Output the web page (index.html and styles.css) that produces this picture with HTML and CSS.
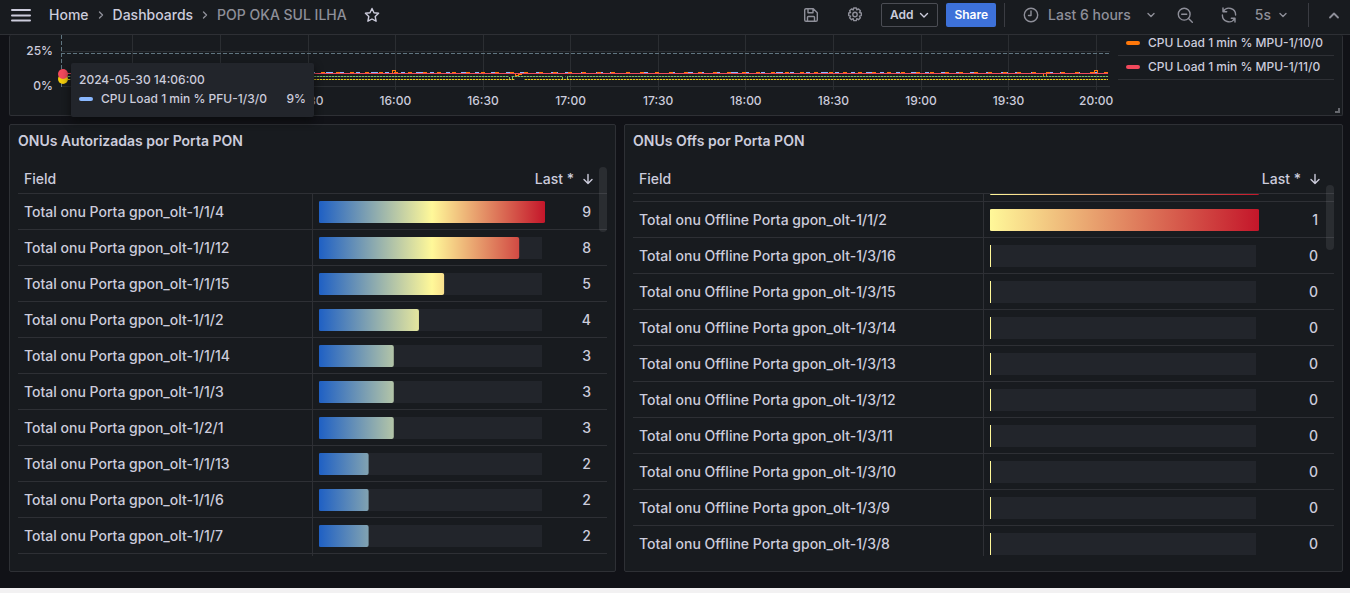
FILE: index.html
```html
<!DOCTYPE html>
<html lang="en">
<head>
<meta charset="utf-8">
<title>POP OKA SUL ILHA - Dashboards</title>
<link rel="stylesheet" href="styles.css">
</head>
<body>
<header class="toolbar">
  <button class="icon-btn menu" aria-label="Menu"><svg width="20" height="14" viewBox="0 0 20 14"><path d="M1 2h18M1 7.500h18M1 12.500h18" stroke-width="2"/></svg></button>
  <nav class="crumbs" aria-label="Breadcrumbs">
    <a href="#">Home</a>
    <svg class="sep" width="8" height="10" viewBox="0 0 8 10"><path d="M2.500 2l3 3-3 3"/></svg>
    <a href="#">Dashboards</a>
    <svg class="sep" width="8" height="10" viewBox="0 0 8 10"><path d="M2.500 2l3 3-3 3"/></svg>
    <span class="current">POP OKA SUL ILHA</span>
  </nav>
  <button class="icon-btn star" aria-label="Mark as favorite"><svg width="16" height="16" viewBox="0 0 16 16"><path d="M8 1.500l2 4.200 4.600.6-3.400 3.200.9 4.700L8 12l-4.100 2.200.9-4.700L1.400 6.300 6 5.700z"/></svg></button>
  <div class="actions">
    <button class="icon-btn" aria-label="Save dashboard"><svg width="16" height="16" viewBox="0 0 16 16"><path d="M3 1.700h7.300l4 4V13a1.300 1.300 0 0 1-1.300 1.300H3A1.300 1.300 0 0 1 1.700 13V3A1.300 1.300 0 0 1 3 1.700zM5 2v3.700h5V2M4.500 14v-3.700A.8.800 0 0 1 5.300 9.500h5.400a.8.800 0 0 1 .8.800V14"/></svg></button>
    <button class="icon-btn gear" aria-label="Dashboard settings"><svg width="16" height="16" viewBox="0 0 16 16"><path d="M6.700 1h2.600l.5 1.900 1.700-1 1.900 1.900-1 1.700 1.900.5v2.600l-1.900.5 1 1.700-1.900 1.900-1.700-1-.5 1.900H6.700l-.5-1.900-1.700 1-1.900-1.900 1-1.700L1.700 8.600V6l1.900-.5-1-1.700 1.900-1.900 1.700 1z"/><circle cx="8" cy="7.500" r="2.200"/></svg></button>
    <button class="btn btn-outline">Add <svg width="10" height="8" viewBox="0 0 10 8"><path d="M1.500 2.500L5 6l3.500-3.500"/></svg></button>
    <button class="btn btn-primary">Share</button>
    <span class="divider"></span>
    <button class="text-btn time"><svg width="16" height="16" viewBox="0 0 16 16"><circle cx="8" cy="8" r="6.700"/><path d="M8 4v4.500H5.500"/></svg><span>Last 6 hours</span><svg width="10" height="8" viewBox="0 0 10 8"><path d="M2 2.500l3 3 3-3"/></svg></button>
    <button class="icon-btn zoom" aria-label="Zoom out"><svg width="16" height="16" viewBox="0 0 16 16"><circle cx="7.200" cy="7.200" r="5.900"/><path d="M11.500 11.500l3.800 3.800M4.700 7.200h5"/></svg></button>
    <button class="icon-btn refresh" aria-label="Refresh"><svg width="16" height="16" viewBox="0 0 16 16"><path d="M2 1v3.700h3.700M2.300 4.500A6.600 6.600 0 0 1 14.600 8M14 15v-3.700h-3.700M13.700 11.500A6.600 6.600 0 0 1 1.400 8"/></svg></button>
    <button class="text-btn interval"><span>5s</span><svg width="10" height="8" viewBox="0 0 10 8"><path d="M2 2.500l3 3 3-3"/></svg></button>
    <span class="divider"></span>
    <button class="icon-btn collapse" aria-label="Collapse toolbar"><svg width="12" height="8" viewBox="0 0 12 8"><path d="M2 6.500l4-4 4 4" stroke-width="1.800"/></svg></button>
  </div>
</header>

<main class="dashboard">
  <section class="panel chart-panel">
    <div class="y-axis"><span>25%</span><span>0%</span></div>
    <div class="plot">
      <svg class="series" viewBox="0 0 1049 56" preserveAspectRatio="none" aria-hidden="true">
        <path class="grid" d="M71.500 0v55M159.500 0v55M247.500 0v55M334.500 0v55M422.500 0v55M509.500 0v55M597.500 0v55M684.500 0v55M772.500 0v55M860.500 0v55M947.500 0v55M1035.500 0v55M0 16.500h1049M0 51.500h1049"/>
        <path class="cursor" d="M0 18.500h1049M.5 0v52"/>
        <path class="blue" d="M250 37.500h797"/>
        <path class="orange" d="M260 37.500h787"/>
        <path class="red" d="M0 38.500h1047"/>
        <path class="orange-mark" d="M331.500 38v-2.500h3V38M454.500 39v1.500h3V39h3M982.500 39v2.500h3V39M1033.500 38v-2.500h3V38"/>
        <path class="green" d="M0 41.500h448v3h3v-3h50v2.500h5v-2.500h541"/>
        <path class="yellow" d="M0 44.500h454M463 44.500h584"/>
        <path class="dots" d="M0 41.500h1047M0 44.500h454M463 44.500h584"/>
      </svg>
      <div class="x-axis"><span>15:30</span><span>16:00</span><span>16:30</span><span>17:00</span><span>17:30</span><span>18:00</span><span>18:30</span><span>19:00</span><span>19:30</span><span>20:00</span></div>
      <i class="point point-yellow"></i><i class="point point-red"></i>
      <div class="tooltip">
        <div>2024-05-30 14:06:00</div>
        <div class="tip-row"><i class="swatch swatch-blue"></i><span>CPU Load 1 min % PFU-1/3/0</span><span class="tip-value">9%</span></div>
      </div>
    </div>
    <ul class="legend">
      <li><i class="swatch swatch-orange"></i>CPU Load 1 min % MPU-1/10/0</li>
      <li><i class="swatch swatch-red"></i>CPU Load 1 min % MPU-1/11/0</li>
    </ul>
    <i class="resize"></i>
  </section>

  <section class="panel">
    <h2>ONUs Autorizadas por Porta PON</h2>
    <div class="table-wrap">
      <table class="table cool">
        <thead><tr><th>Field</th><th class="num">Last * <svg width="12" height="12" viewBox="0 0 12 12"><path d="M6 1.500v9M2 6.500l4 4 4-4"/></svg></th></tr></thead>
        <tbody>
          <tr><td>Total onu Porta gpon_olt-1/1/4</td><td class="value"><div class="gauge"><i style="--rest:0%"></i></div><span>9</span></td></tr>
          <tr><td>Total onu Porta gpon_olt-1/1/12</td><td class="value"><div class="gauge"><i style="--rest:11.5%"></i></div><span>8</span></td></tr>
          <tr><td>Total onu Porta gpon_olt-1/1/15</td><td class="value"><div class="gauge"><i style="--rest:44.600%"></i></div><span>5</span></td></tr>
          <tr><td>Total onu Porta gpon_olt-1/1/2</td><td class="value"><div class="gauge"><i style="--rest:55.700%"></i></div><span>4</span></td></tr>
          <tr><td>Total onu Porta gpon_olt-1/1/14</td><td class="value"><div class="gauge"><i style="--rest:66.800%"></i></div><span>3</span></td></tr>
          <tr><td>Total onu Porta gpon_olt-1/1/3</td><td class="value"><div class="gauge"><i style="--rest:66.800%"></i></div><span>3</span></td></tr>
          <tr><td>Total onu Porta gpon_olt-1/2/1</td><td class="value"><div class="gauge"><i style="--rest:66.800%"></i></div><span>3</span></td></tr>
          <tr><td>Total onu Porta gpon_olt-1/1/13</td><td class="value"><div class="gauge"><i style="--rest:77.900%"></i></div><span>2</span></td></tr>
          <tr><td>Total onu Porta gpon_olt-1/1/6</td><td class="value"><div class="gauge"><i style="--rest:77.900%"></i></div><span>2</span></td></tr>
          <tr><td>Total onu Porta gpon_olt-1/1/7</td><td class="value"><div class="gauge"><i style="--rest:77.900%"></i></div><span>2</span></td></tr>
          <tr><td></td><td></td></tr>
        </tbody>
      </table>
      <i class="thumb"></i>
    </div>
  </section>

  <section class="panel">
    <h2>ONUs Offs por Porta PON</h2>
    <div class="table-wrap">
      <table class="table warm scrolled">
        <thead><tr><th>Field</th><th class="num">Last * <svg width="12" height="12" viewBox="0 0 12 12"><path d="M6 1.500v9M2 6.500l4 4 4-4"/></svg></th></tr></thead>
        <tbody>
          <tr><td></td><td class="value"><div class="gauge"><i style="--rest:0%"></i></div></td></tr>
          <tr><td>Total onu Offline Porta gpon_olt-1/1/2</td><td class="value"><div class="gauge"><i style="--rest:0%"></i></div><span>1</span></td></tr>
          <tr><td>Total onu Offline Porta gpon_olt-1/3/16</td><td class="value"><div class="gauge zero"></div><span>0</span></td></tr>
          <tr><td>Total onu Offline Porta gpon_olt-1/3/15</td><td class="value"><div class="gauge zero"></div><span>0</span></td></tr>
          <tr><td>Total onu Offline Porta gpon_olt-1/3/14</td><td class="value"><div class="gauge zero"></div><span>0</span></td></tr>
          <tr><td>Total onu Offline Porta gpon_olt-1/3/13</td><td class="value"><div class="gauge zero"></div><span>0</span></td></tr>
          <tr><td>Total onu Offline Porta gpon_olt-1/3/12</td><td class="value"><div class="gauge zero"></div><span>0</span></td></tr>
          <tr><td>Total onu Offline Porta gpon_olt-1/3/11</td><td class="value"><div class="gauge zero"></div><span>0</span></td></tr>
          <tr><td>Total onu Offline Porta gpon_olt-1/3/10</td><td class="value"><div class="gauge zero"></div><span>0</span></td></tr>
          <tr><td>Total onu Offline Porta gpon_olt-1/3/9</td><td class="value"><div class="gauge zero"></div><span>0</span></td></tr>
          <tr><td>Total onu Offline Porta gpon_olt-1/3/8</td><td class="value"><div class="gauge zero"></div><span>0</span></td></tr>
        </tbody>
      </table>
      <i class="thumb thumb-low"></i>
    </div>
  </section>
</main>
<footer class="strip"></footer>
</body>
</html>
```
FILE: styles.css
```css
:root {
  --text: #ccccdc;
  --muted: #8e8f99;
  --line: #2e3035;
  --panel: #181b1f;
}
* { box-sizing: border-box; }
body {
  margin: 0;
  background: #111217;
  color: var(--text);
  font: 500 14px/22px Inter, Roboto, sans-serif;
}
svg { display: block; flex: none; fill: none; stroke: currentColor; stroke-width: 1.4; stroke-linecap: round; stroke-linejoin: round; }
button { font: inherit; color: inherit; background: none; border: 0; padding: 0; cursor: pointer; }

.toolbar {
  display: flex;
  align-items: center;
  height: 35px;
  padding: 0 10px 4px 11px;
  background: var(--panel);
  border-bottom: 1px solid var(--line);
}
.crumbs { display: flex; align-items: center; gap: 8px; margin-left: 18px; }
.crumbs a { color: var(--text); text-decoration: none; }
.sep { color: var(--muted); }
.current { color: var(--muted); }
.star { margin-left: 17px; }
.actions { display: flex; align-items: center; margin-left: auto; color: var(--muted); }
.gear { margin-left: 28px; }
.btn { display: flex; align-items: center; gap: 6px; height: 24px; padding: 0 8px; border-radius: 2px; font-size: 12px; font-weight: 600; }
.btn-outline { margin-left: 18px; border: 1px solid #4b4d54; color: var(--text); }
.btn-primary { margin-left: 8px; background: #3d71d9; color: #fff; }
.divider { width: 1px; height: 24px; margin-left: 8px; background: #3a3c42; }
.text-btn { display: flex; align-items: center; }
.time { margin-left: 18px; gap: 9px; }
.time svg:last-child { margin-left: 6px; }
.zoom { margin-left: 21px; }
.refresh { margin-left: 28px; }
.interval { margin-left: 18px; gap: 7px; }
.interval + .divider { margin-left: 20px; }
.collapse { margin-left: 19px; }

.dashboard { display: grid; grid-template-columns: 607fr 719fr; gap: 8px; padding: 0 7px 16px 9px; }
.panel { position: relative; min-width: 0; padding: 5px 8px 15px; background: var(--panel); border: 1px solid var(--line); border-radius: 2px; }

.chart-panel { grid-column: 1 / -1; display: flex; height: 81px; padding: 0 8px; border-top: 0; font-size: 12px; line-height: 16px; }
.y-axis { display: flex; flex-direction: column; gap: 19px; width: 43px; padding: 8px 8px 0 0; text-align: right; }
.plot { position: relative; flex: 1; min-width: 0; }
.series { width: 100%; height: 56px; stroke-linecap: butt; stroke-width: 1; shape-rendering: crispEdges; }
.grid { stroke: #2b2e32; }
.cursor { stroke: #607580; stroke-dasharray: 4 2; }
.blue { stroke: #8ab8ff; stroke-dasharray: 4 11 7 7 4 12; }
.orange { stroke: #ff780a; stroke-dasharray: 4 11 4 10; }
.red { stroke: #f2495c; }
.orange-mark { stroke: #ff780a; }
.green { stroke: #73bf69; }
.yellow { stroke: #f2cc0c; }
.dots { stroke: #4b5540; stroke-dasharray: 1 2; }
.x-axis { display: grid; grid-template-columns: repeat(10, 1fr); margin: 2px -30px 0 203px; text-align: center; }
.point { position: absolute; left: -3px; width: 10px; height: 10px; border-radius: 50%; }
.point-yellow { top: 39px; background: #f2cc0c; }
.point-red { top: 34px; background: #f2495c; }
.tooltip { position: absolute; z-index: 2; left: 10px; top: 28px; width: 243px; padding: 7px 8px 9px; background: #22252b; border-radius: 2px; box-shadow: 0 4px 8px #0b0c0e; line-height: 20px; white-space: nowrap; }
.tip-row { display: flex; align-items: center; line-height: 18px; }
.tip-value { margin-left: auto; }
.swatch { flex: none; width: 14px; height: 4px; margin-right: 8px; border-radius: 2px; }
.swatch-blue { background: #8ab8ff; }
.swatch-orange { background: #ff780a; }
.swatch-red { background: #f2495c; }
.legend { width: 216px; margin: 0 0 0 8px; padding: 0; list-style: none; }
.legend li { display: flex; align-items: center; height: 24px; padding: 0 8px 1px; border-bottom: 1px solid var(--line); white-space: nowrap; }
.legend li:first-child { height: 21px; padding-bottom: 4px; }
.resize { position: absolute; right: 2px; bottom: 2px; width: 5px; height: 5px; border: solid #66686e; border-width: 0 2px 2px 0; }

h2 { margin: 0 0 13px; font-size: 14px; line-height: 22px; font-weight: 600; }
.table-wrap { position: relative; }
.table { display: block; }
.table thead, .table tbody { display: block; }
.table tr { display: grid; grid-template-columns: 1fr 1fr; height: 36px; border-bottom: 1px solid var(--line); }
.table thead tr { height: 29px; }
.table th, .table td { min-width: 0; padding: 7px 6px 0; text-align: left; font-weight: 500; white-space: nowrap; }
.table th { padding-top: 3px; }
.table td:first-child { border-right: 1px solid var(--line); }
.table .num { display: flex; align-items: center; justify-content: flex-end; gap: 8px; padding: 3px 13px 3px 0; }
.table tbody { height: 362px; overflow: hidden; }
.scrolled tbody tr:first-child { margin-top: -28px; }
.table .value { display: flex; justify-content: space-between; padding-right: 16px; }
.gauge { position: relative; width: calc((100% + 22px) * 77 / 100); height: 22px; border-right: 3px solid transparent; border-radius: 2px; background: #22252b padding-box; }
.gauge i { position: absolute; inset: 0 -3px 0 0; clip-path: inset(0 var(--rest) 0 0 round 2px); }
.cool .gauge i { background: linear-gradient(90deg, #1f60c4, #fff899 50%, #c4162a); }
.warm .gauge i { background: linear-gradient(90deg, #fff899, #c4162a); }
.zero { border-left: 1px solid #fff899; border-radius: 0 2px 2px 0; }
.thumb { position: absolute; right: 0; top: 2px; width: 8px; height: 65px; border-radius: 4px; background: rgba(204, 204, 220, 0.1); }
.thumb-low { top: 20px; }
.strip { height: 5px; background: #f2f1f2; }
```
